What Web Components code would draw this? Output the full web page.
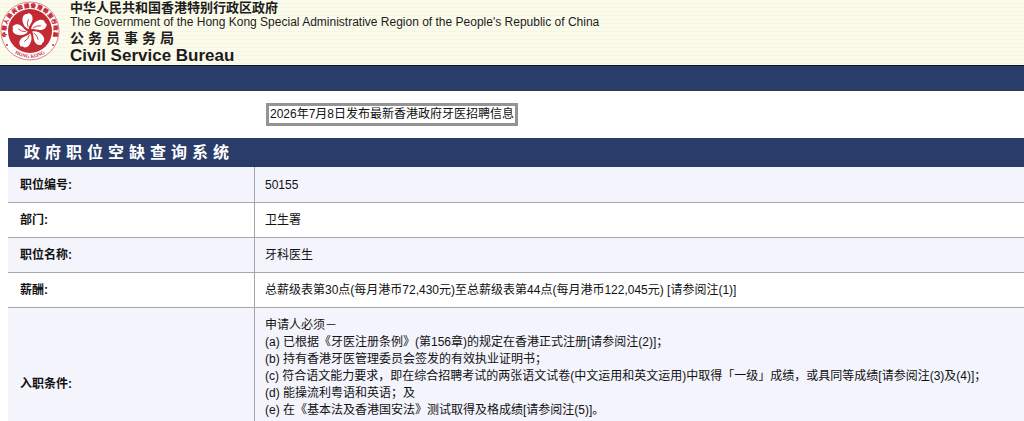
<!DOCTYPE html>
<html lang="zh-Hans">
<head>
<meta charset="utf-8">
<meta name="viewport" content="width=device-width, initial-scale=1">
<title>政府职位空缺查询系统</title>
<style>
  html { overflow-x: hidden; scrollbar-width: none; }
  body {
    margin: 0;
    background: #fff;
    color: #111;
    font: 12px/17px "Liberation Sans", "Noto Sans CJK SC", sans-serif;
  }
</style>
</head>
<body>
<csb-header>
  <span slot="gov-zh">中华人民共和国香港特别行政区政府</span>
  <span slot="gov-en" lang="en">The Government of the Hong Kong Special Administrative Region of the People's Republic of China</span>
  <span slot="bureau-zh">公务员事务局</span>
  <span slot="bureau-en" lang="en">Civil Service Bureau</span>
</csb-header>
<main>
  <notice-box>2026年7月8日发布最新香港政府牙医招聘信息</notice-box>
  <vacancy-table></vacancy-table>
</main>

<script>
class HkEmblem extends HTMLElement {
  constructor() {
    super();
    const petal = '<path d="M-1 -2C-4 -4 -6 -8 -5 -13C-4 -17 -1 -18 1 -17L2 -18C6 -16 6 -12 4 -9C2 -6 0 -5 -1 -2Z" fill="#fff"/><path d="M-1 -4Q-2 -8 1 -12" fill="none" stroke="#c42a34" stroke-width=".8"/>';
    const petals = [-12, 60, 132, 204, 276].map(a => `<g transform="rotate(${a})">${petal}</g>`).join('');
    this.attachShadow({ mode: 'open' }).innerHTML = `
      <style>
        :host { display: block; width: 60px; height: 62px; }
        svg { display: block; }
        text { fill: #c42a34; font-family: "Liberation Serif", "Noto Sans CJK TC", serif; font-weight: 700; }
        .top { stroke: #c42a34; stroke-width: .4px; }
      </style>
      <svg width="60" height="62" viewBox="-30 -31 60 62" role="img" aria-label="香港特别行政区区徽">
        <circle r="29" fill="#fff" stroke="#d9828a" stroke-width="1"/>
        <circle r="22" fill="#c42a34"/>
        ${petals}
        <defs>
          <path id="top" d="M-22 10A24 24 0 1 1 22 10"/>
          <path id="bottom" d="M-20 18A27 27 0 0 0 20 18"/>
        </defs>
        <text class="top" font-size="5"><textPath href="#top" startOffset="50%" text-anchor="middle">中 華 人 民 共 和 國 香 港 特 別 行 政 區</textPath></text>
        <text font-size="5"><textPath href="#bottom" startOffset="50%" text-anchor="middle">HONG KONG</textPath></text>
        <circle cx="-23" cy="14" r="1" fill="#c42a34"/>
        <circle cx="23" cy="14" r="1" fill="#c42a34"/>
      </svg>`;
  }
}
customElements.define('hk-emblem', HkEmblem);

class CsbHeader extends HTMLElement {
  constructor() {
    super();
    this.attachShadow({ mode: 'open' }).innerHTML = `
      <style>
        :host { display: block; }
        header {
          display: flex; gap: 10px; height: 65px;
          background: repeating-linear-gradient(#fcfcec 0 3px, #f5f5e4 3px 4px);
        }
        .names { white-space: nowrap; color: #1c1c1c; }
        .gov-zh { font-size: 13px; line-height: 15px; font-weight: 700; }
        .gov-en { font-size: 12px; line-height: 14px; }
        .bureau-zh { font-size: 14px; line-height: 18px; font-weight: 700; letter-spacing: 4px; }
        .bureau-en { font-size: 17px; line-height: 17px; font-weight: 700; }
        nav { height: 24px; background: #2a3c6a; border-top: 1px solid #10131c; border-bottom: 1px solid #34363e; }
      </style>
      <header>
        <hk-emblem></hk-emblem>
        <div class="names">
          <div class="gov-zh"><slot name="gov-zh"></slot></div>
          <div class="gov-en"><slot name="gov-en"></slot></div>
          <div class="bureau-zh"><slot name="bureau-zh"></slot></div>
          <div class="bureau-en"><slot name="bureau-en"></slot></div>
        </div>
      </header>
      <nav></nav>`;
  }
}
customElements.define('csb-header', CsbHeader);

class NoticeBox extends HTMLElement {
  constructor() {
    super();
    this.attachShadow({ mode: 'open' }).innerHTML = `
      <style>
        :host { display: block; padding: 12px 8px 12px 266px; }
        p { width: fit-content; margin: 0; padding: 0 1px; border: 3px solid #949494; background: #fff; font-size: 12px; }
      </style>
      <p><slot></slot></p>`;
  }
}
customElements.define('notice-box', NoticeBox);

class VacancyTable extends HTMLElement {
  constructor() {
    super();
    const rows = [
      ['职位编号:', ['50155']],
      ['部门:', ['卫生署']],
      ['职位名称:', ['牙科医生']],
      ['薪酬:', ['总薪级表第30点(每月港币72,430元)至总薪级表第44点(每月港币122,045元) [请参阅注(1)]']],
      ['入职条件:', [
        '申请人必须－',
        '(a) 已根据《牙医注册条例》(第156章)的规定在香港正式注册[请参阅注(2)]；',
        '(b) 持有香港牙医管理委员会签发的有效执业证明书；',
        '(c) 符合语文能力要求，即在综合招聘考试的两张语文试卷(中文运用和英文运用)中取得「一级」成绩，或具同等成绩[请参阅注(3)及(4)]；',
        '(d) 能操流利粤语和英语；及',
        '(e) 在《基本法及香港国安法》测试取得及格成绩[请参阅注(5)]。'
      ]]
    ];
    const body = rows.map(([label, lines]) =>
      `<tr><th scope="row">${label}</th><td>${lines.map(l => `<div>${l}</div>`).join('')}</td></tr>`).join('');
    this.attachShadow({ mode: 'open' }).innerHTML = `
      <style>
        :host { display: block; padding-left: 8px; }
        table { width: 100%; border-collapse: separate; border-spacing: 0; font: inherit; }
        caption {
          padding-left: 16px; text-align: left; background: #2a3c6a; color: #fff;
          font-size: 16px; line-height: 29px; font-weight: 700; letter-spacing: 5px;
        }
        th, td { padding: 9px 10px 8px; text-align: left; vertical-align: middle; border-bottom: 1px solid #a6a6aa; }
        th { width: 224px; padding-left: 12px; border-right: 1px solid #a6a6aa; font-weight: 700; }
        tr:nth-child(odd) { background: #f3f4fc; }
        tr:first-child > * { padding-top: 10px; }
        tr:last-child td { padding-bottom: 40px; }
      </style>
      <table>
        <caption>政府职位空缺查询系统</caption>
        <tbody>${body}</tbody>
      </table>`;
  }
}
customElements.define('vacancy-table', VacancyTable);
</script>
</body>
</html>
